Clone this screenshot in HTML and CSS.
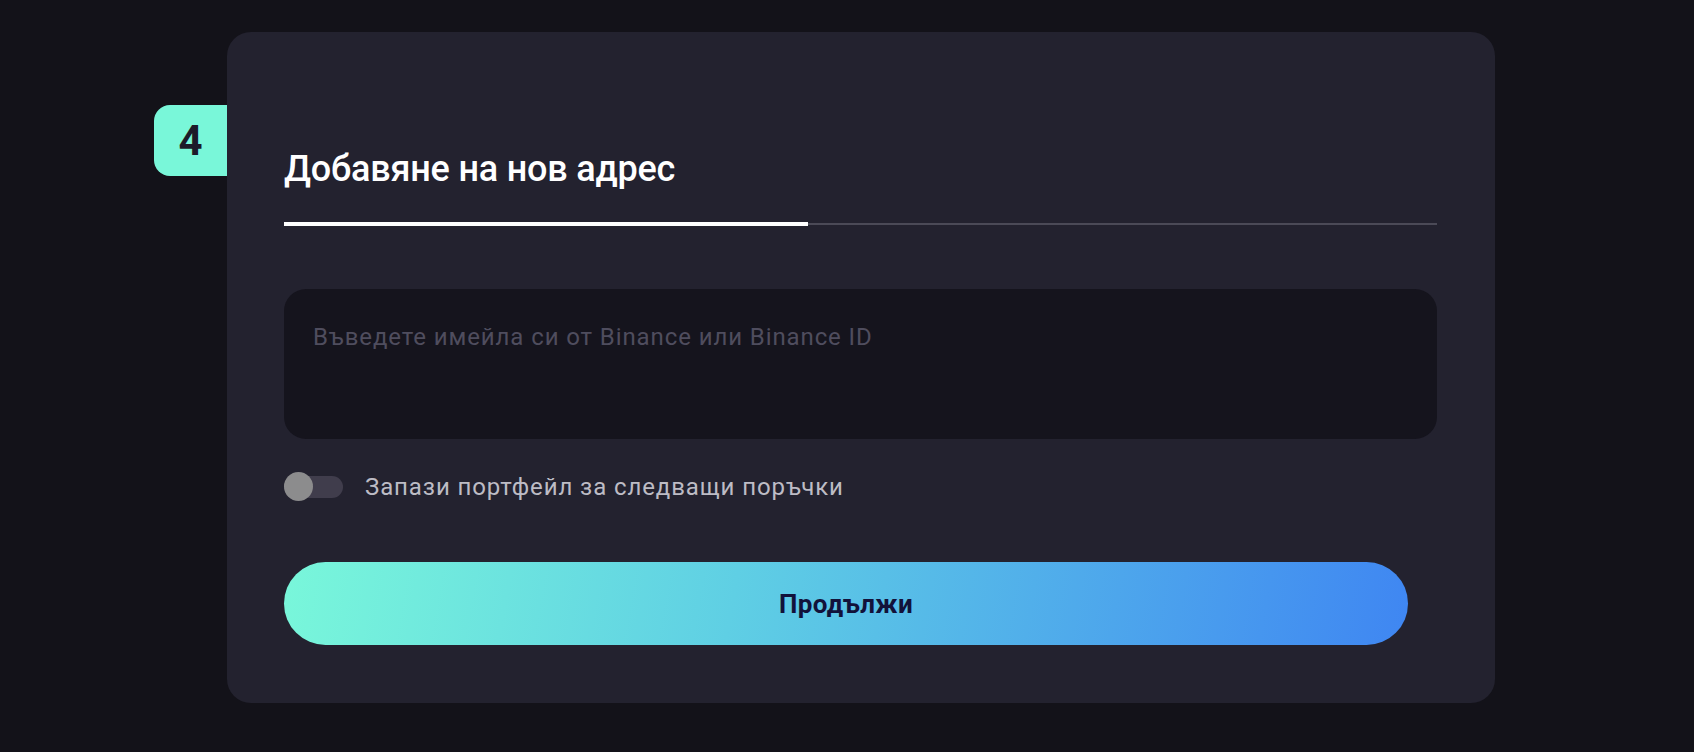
FILE: index.html
```html
<!DOCTYPE html>
<html lang="bg">
<head>
<meta charset="utf-8">
<title>Добавяне на нов адрес</title>
<link rel="stylesheet" href="styles.css">
</head>
<body>
<main class="page">
  <section class="card">
    <div class="step-badge">4</div>
    <h1 class="title">Добавяне на нов адрес</h1>
    <div class="tabs">
      <div class="tab tab-active"></div>
      <div class="tab"></div>
    </div>
    <div class="field">
      <span class="placeholder">Въведете имейла си от Binance или Binance ID</span>
    </div>
    <label class="save-row">
      <span class="toggle"><span class="knob"></span></span>
      <span class="save-label">Запази портфейл за следващи поръчки</span>
    </label>
    <button class="btn-continue" type="button">Продължи</button>
  </section>
</main>
</body>
</html>
```
FILE: styles.css
```css
* { box-sizing: border-box; }
html, body {
  margin: 0;
  padding: 0;
  background: #131219;
  height: 100%;
}
body {
  font-family: Roboto, "Noto Sans", sans-serif;
  color: #fff;
}
.page {
  padding: 32px 0 0 227px;
}
.card {
  position: relative;
  width: 1268px;
  height: 671px;
  background: #23222f;
  border-radius: 24px;
  padding: 0 58px 0 57px;
  display: flex;
  flex-direction: column;
}
.step-badge {
  position: absolute;
  left: -73px;
  top: 73px;
  width: 73px;
  height: 71px;
  background: #79f7d9;
  border-radius: 16px 0 0 16px;
  color: #1c1b29;
  font-size: 42px;
  font-weight: 700;
  display: flex;
  align-items: center;
  justify-content: center;
}
.title {
  margin: 115px 0 0;
  font-size: 36px;
  line-height: 44px;
  font-weight: 500;
  letter-spacing: -0.2px;
}
.tabs {
  margin-top: 31px;
  display: flex;
  align-items: center;
  height: 4px;
}
.tab {
  flex: 1;
  height: 2px;
  background: #4b4a57;
}
.tab-active {
  flex: 0 0 524px;
  height: 4px;
  background: #ffffff;
}
.field {
  margin-top: 63px;
  height: 150px;
  background: #15141d;
  border-radius: 22px;
  padding: 33px 29px;
}
.placeholder {
  font-size: 24px;
  line-height: 30px;
  letter-spacing: 0.9px;
  color: #4f4d5e;
}
.save-row {
  margin-top: 33px;
  display: flex;
  align-items: center;
  gap: 22px;
}
.toggle {
  position: relative;
  width: 59px;
  height: 22px;
  background: #403d4c;
  border-radius: 11px;
}
.knob {
  position: absolute;
  left: 0;
  top: -4px;
  width: 29px;
  height: 29px;
  border-radius: 50%;
  background: #8c8c8d;
}
.save-label {
  font-size: 24px;
  line-height: 30px;
  letter-spacing: 0.9px;
  color: #bdbcc5;
}
.btn-continue {
  margin-top: 60px;
  width: 1124px;
  height: 83px;
  border: none;
  border-radius: 42px;
  background: linear-gradient(100deg, #79f7da 0%, #5fcfe4 40%, #3f86f2 100%);
  color: #12123a;
  font-family: Roboto, "Noto Sans", sans-serif;
  font-size: 26px;
  font-weight: 700;
  letter-spacing: 0.3px;
  cursor: pointer;
}
```
